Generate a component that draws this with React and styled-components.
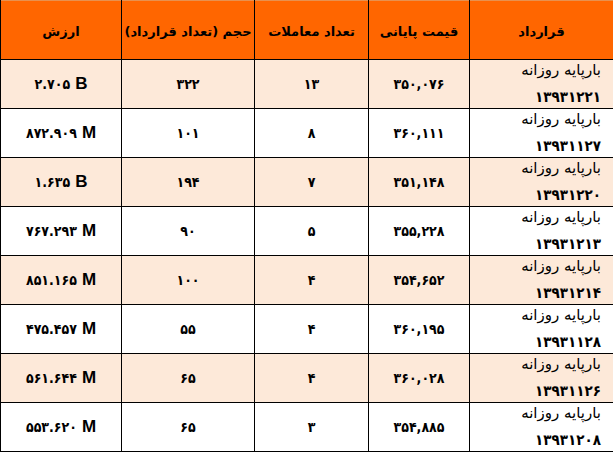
import React from "react";
import styled, { createGlobalStyle } from "styled-components";

const Global = createGlobalStyle`
  html, body { margin: 0; padding: 0; background: #ffffff; }
  body { font-family: "DejaVu Sans Condensed", "DejaVu Sans", sans-serif; color: #000; }
`;

const Sheet = styled.div`
  direction: rtl;
  display: grid;
  grid-template-columns: 143px 100px 113px 132px 120px;
  grid-template-rows: 59px repeat(8, 48px);
  gap: 1px;
  width: 612px;
  padding: 0 0 1px 1px;
  background: #000;
`;

const HeadCell = styled.div`
  background: #ff6600;
  box-shadow: inset 0 1px 0 #e8914f;
  display: flex;
  align-items: center;
  justify-content: center;
  font-family: "DejaVu Sans", sans-serif;
  font-weight: 700;
  font-size: 13px;
  white-space: nowrap;
  padding-top: 3px;
`;

const Cell = styled.div`
  background: ${(p) => (p.$shade ? "#fde9d9" : "#ffffff")};
  display: flex;
  align-items: center;
  justify-content: center;
  font-family: "DejaVu Sans Condensed", "DejaVu Sans", sans-serif;
  font-weight: 700;
  font-size: 14px;
  white-space: nowrap;
`;

const ContractCell = styled(Cell)`
  flex-direction: column;
  align-items: flex-start;
  justify-content: center;
  padding-right: 12px;
  line-height: 27px;
  font-size: 15px;
  overflow: hidden;
`;

const ContractName = styled.span`
  font-weight: 400;
  font-family: "DejaVu Sans", sans-serif;
  font-size: 15px;
`;

const Value = styled.span`
  direction: ltr;
  display: inline-flex;
  align-items: baseline;
  gap: 5px;
`;

const Unit = styled.span`
  font-family: "Liberation Sans", Arial, sans-serif;
  font-weight: 700;
  font-size: 17px;
`;

const headers = ["قرارداد", "قیمت پایانی", "تعداد معاملات", "حجم (تعداد قرارداد)", "ارزش"];

const rows = [
  ["۱۳۹۳۱۲۲۱", "۳۵۰,۰۷۶", "۱۳", "۳۲۲", "۲.۷۰۵", "B"],
  ["۱۳۹۳۱۱۲۷", "۳۶۰,۱۱۱", "۸", "۱۰۱", "۸۷۲.۹۰۹", "M"],
  ["۱۳۹۳۱۲۲۰", "۳۵۱,۱۴۸", "۷", "۱۹۴", "۱.۶۳۵", "B"],
  ["۱۳۹۳۱۲۱۳", "۳۵۵,۲۲۸", "۵", "۹۰", "۷۶۷.۲۹۳", "M"],
  ["۱۳۹۳۱۲۱۴", "۳۵۴,۶۵۲", "۴", "۱۰۰", "۸۵۱.۱۶۵", "M"],
  ["۱۳۹۳۱۱۲۸", "۳۶۰,۱۹۵", "۴", "۵۵", "۴۷۵.۴۵۷", "M"],
  ["۱۳۹۳۱۱۲۶", "۳۶۰,۰۲۸", "۴", "۶۵", "۵۶۱.۶۴۴", "M"],
  ["۱۳۹۳۱۲۰۸", "۳۵۴,۸۸۵", "۳", "۶۵", "۵۵۳.۶۲۰", "M"],
];

export default function App() {
  return (
    <>
      <Global />
      <Sheet>
        {headers.map((h) => (
          <HeadCell key={h}>{h}</HeadCell>
        ))}
        {rows.map(([date, price, trades, volume, value, unit], i) => {
          const shade = i % 2 === 0;
          return (
            <React.Fragment key={date}>
              <ContractCell $shade={shade}>
                <ContractName>بارپایه روزانه</ContractName>
                <span>{date}</span>
              </ContractCell>
              <Cell $shade={shade}>{price}</Cell>
              <Cell $shade={shade}>{trades}</Cell>
              <Cell $shade={shade}>{volume}</Cell>
              <Cell $shade={shade}>
                <Value>
                  <span>{value}</span>
                  <Unit>{unit}</Unit>
                </Value>
              </Cell>
            </React.Fragment>
          );
        })}
      </Sheet>
    </>
  );
}
